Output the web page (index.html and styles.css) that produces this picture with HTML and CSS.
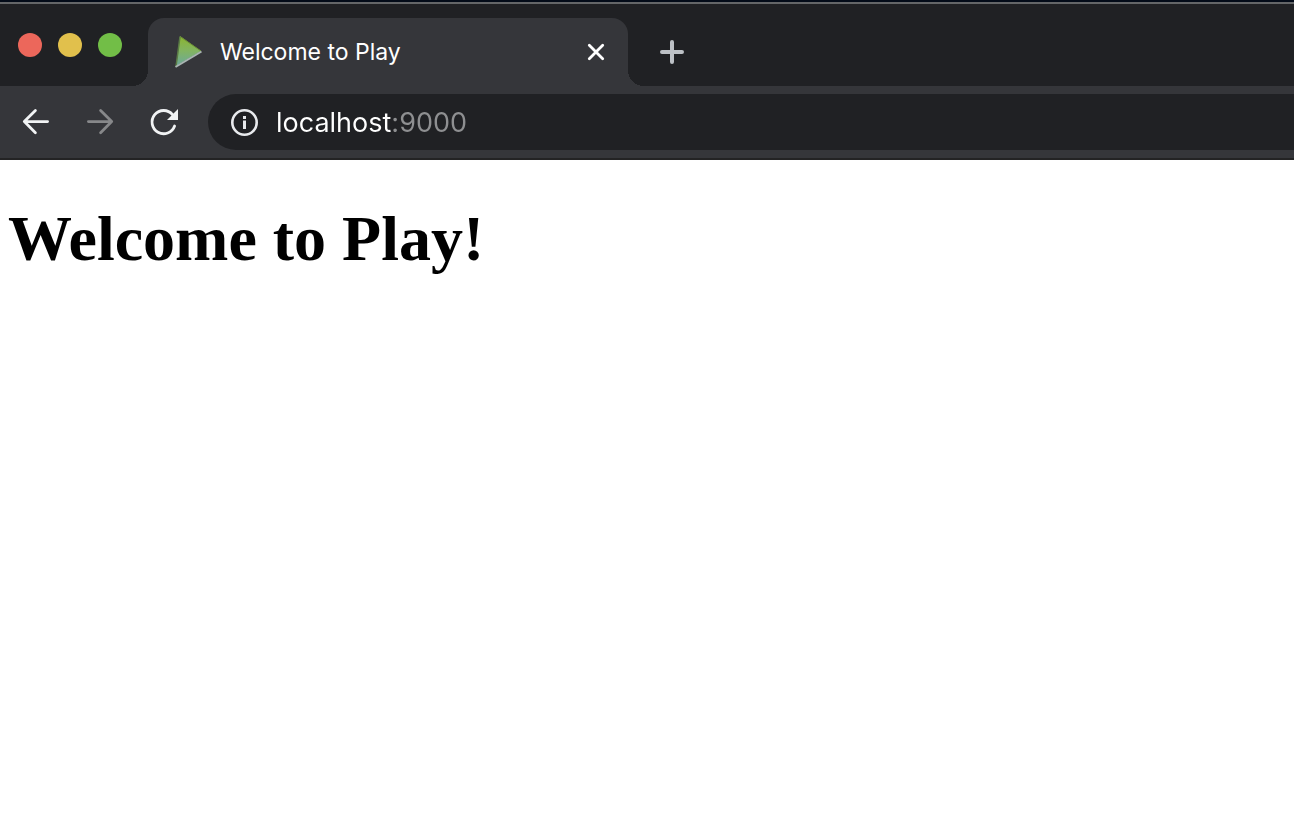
FILE: index.html
```html
<!DOCTYPE html>
<html lang="en">
<head>
  <meta charset="utf-8">
  <meta name="viewport" content="width=device-width, initial-scale=1">
  <title>Welcome to Play</title>
  <link rel="stylesheet" href="styles.css">
</head>
<body>
  <header class="browser">
    <div class="tab-strip">
      <div class="window-controls">
        <button class="light light-close" type="button" aria-label="Close window"></button>
        <button class="light light-minimize" type="button" aria-label="Minimize window"></button>
        <button class="light light-zoom" type="button" aria-label="Zoom window"></button>
      </div>
      <div class="tab">
        <svg class="favicon" viewBox="0 0 32 36" aria-hidden="true">
          <defs>
            <linearGradient id="play" x1="0" y1="0" x2="0" y2="1">
              <stop offset="0" stop-color="#8bb52e"/>
              <stop offset="0.5" stop-color="#82b462"/>
              <stop offset="1" stop-color="#6ba99c"/>
            </linearGradient>
          </defs>
          <path d="M8 2 29 17 4 32z" fill="url(#play)"/>
          <path d="M8 2.500 29 17" fill="none" stroke="#6b8f35" stroke-width="1"/>
          <path d="M8 2.500 4 32.500" fill="none" stroke="#5a7a45" stroke-width="1.500"/>
          <path d="M3.500 33 29.500 17.500" fill="none" stroke="#a9b5b2" stroke-width="2"/>
        </svg>
        <span class="tab-title">Welcome to Play</span>
        <button class="icon-button tab-close" type="button" aria-label="Close tab">
          <svg viewBox="0 0 24 24" aria-hidden="true"><path d="M5.300 5.300 18.700 18.700M18.700 5.300 5.300 18.700" fill="none" stroke="#fff" stroke-width="2.800" stroke-linecap="round"/></svg>
        </button>
      </div>
      <button class="icon-button new-tab" type="button" aria-label="New tab">
        <svg viewBox="0 0 24 24" aria-hidden="true"><path d="M12 2V22M2 12H22" fill="none" stroke="#bdc1c6" stroke-width="4" stroke-linecap="round"/></svg>
      </button>
    </div>
    <div class="toolbar">
      <nav class="navigation" aria-label="History">
        <button class="icon-button nav-button" type="button" aria-label="Back">
          <svg viewBox="0 0 32 32" aria-hidden="true"><path d="M27.600 15.600H5M15.400 4.500 4.300 15.600 15.400 26.700" fill="none" stroke="#f1f3f4" stroke-width="2.800" stroke-linecap="round" stroke-linejoin="round"/></svg>
        </button>
        <button class="icon-button nav-button" type="button" aria-label="Forward" disabled>
          <svg viewBox="0 0 32 32" aria-hidden="true"><path d="M4.400 15.600H27M16.600 4.500 27.700 15.600 16.600 26.700" fill="none" stroke="#87888a" stroke-width="2.800" stroke-linecap="round" stroke-linejoin="round"/></svg>
        </button>
        <button class="icon-button nav-button" type="button" aria-label="Reload">
          <svg viewBox="0 0 32 32" aria-hidden="true"><path d="M26.600 20A11.600 11.600 0 1 1 24.500 8.600" fill="none" stroke="#f1f3f4" stroke-width="2.800" stroke-linecap="round"/><path d="M30 3V14H19z" fill="#f1f3f4"/></svg>
        </button>
      </nav>
      <form class="omnibox">
        <svg class="site-info" viewBox="0 0 28 28" aria-hidden="true"><circle cx="14.500" cy="14.500" r="12.200" fill="none" stroke="#e8eaed" stroke-width="2.600"/><path d="M13 8h3v3h-3zM13 12.500h3v8.500h-3z" fill="#e8eaed"/></svg>
        <input class="address" type="text" aria-label="Address" value="localhost:9000" spellcheck="false">
      </form>
    </div>
  </header>
  <main class="page">
    <h1 class="page-title">Welcome to Play!</h1>
  </main>
</body>
</html>
```
FILE: styles.css
```css
:root {
  --frame: #202124;
  --toolbar: #35363a;
}

* {
  box-sizing: border-box;
}

body {
  margin: 0;
  background: #fff;
}

button {
  padding: 0;
  border: 0;
  background: none;
}

svg {
  display: block;
}

.browser {
  border-top: 2px solid #030b18;
  border-bottom: 2px solid #232324;
  background: var(--toolbar);
  font-family: Inter, "Liberation Sans", sans-serif;
}

.tab-strip {
  display: flex;
  align-items: flex-end;
  height: 84px;
  border-top: 2px solid #646668;
  background: var(--frame);
}

.window-controls {
  display: flex;
  gap: 16px;
  width: 148px;
  padding: 0 18px;
  align-self: flex-start;
  margin-top: 29px;
}

.light {
  width: 24px;
  height: 24px;
  border-radius: 50%;
}

.light-close {
  background: #ec675b;
}

.light-minimize {
  background: #e1c04c;
}

.light-zoom {
  background: #72be47;
}

.tab {
  position: relative;
  display: flex;
  align-items: center;
  width: 480px;
  height: 68px;
  padding: 0 20px 0 24px;
  border-radius: 16px 16px 0 0;
  background: var(--toolbar);
}

.tab::before,
.tab::after {
  content: "";
  position: absolute;
  bottom: 0;
  width: 16px;
  height: 16px;
}

.tab::before {
  right: 100%;
  background: radial-gradient(circle at 0 0, var(--frame) 16px, var(--toolbar) 16px);
}

.tab::after {
  left: 100%;
  background: radial-gradient(circle at 100% 0, var(--frame) 16px, var(--toolbar) 16px);
}

.favicon {
  width: 32px;
  height: 36px;
}

.tab-title {
  flex: 1;
  margin-left: 16px;
  color: #fff;
  font-size: 23px;
  line-height: 32px;
}

.tab-close svg,
.new-tab svg {
  width: 24px;
  height: 24px;
}

.new-tab {
  margin: 0 0 22px 32px;
}

.toolbar {
  display: flex;
  align-items: center;
  height: 72px;
  padding-left: 20px;
}

.navigation {
  display: flex;
  gap: 32px;
  width: 188px;
}

.nav-button svg {
  width: 32px;
  height: 32px;
}

.omnibox {
  display: flex;
  flex: 1;
  align-items: center;
  gap: 18px;
  height: 56px;
  padding-left: 22px;
  border-radius: 28px 0 0 28px;
  background: var(--frame);
}

.site-info {
  width: 28px;
  height: 28px;
}

/* The host is white and the port is grey. */
.address {
  flex: 1;
  min-width: 0;
  height: 40px;
  padding: 0;
  border: 0;
  outline: 0;
  background: linear-gradient(90deg, #fff 115px, #8e8f91 115px);
  background-clip: text;
  -webkit-background-clip: text;
  -webkit-text-fill-color: transparent;
  color: #fff;
  font-family: inherit;
  font-size: 27px;
}

.page {
  padding: 0 8px;
}

.page-title {
  margin: 42px 0;
  color: #000;
  font-family: "Liberation Serif", "Times New Roman", serif;
  font-size: 64px;
  font-weight: 700;
  line-height: 74px;
}
```
